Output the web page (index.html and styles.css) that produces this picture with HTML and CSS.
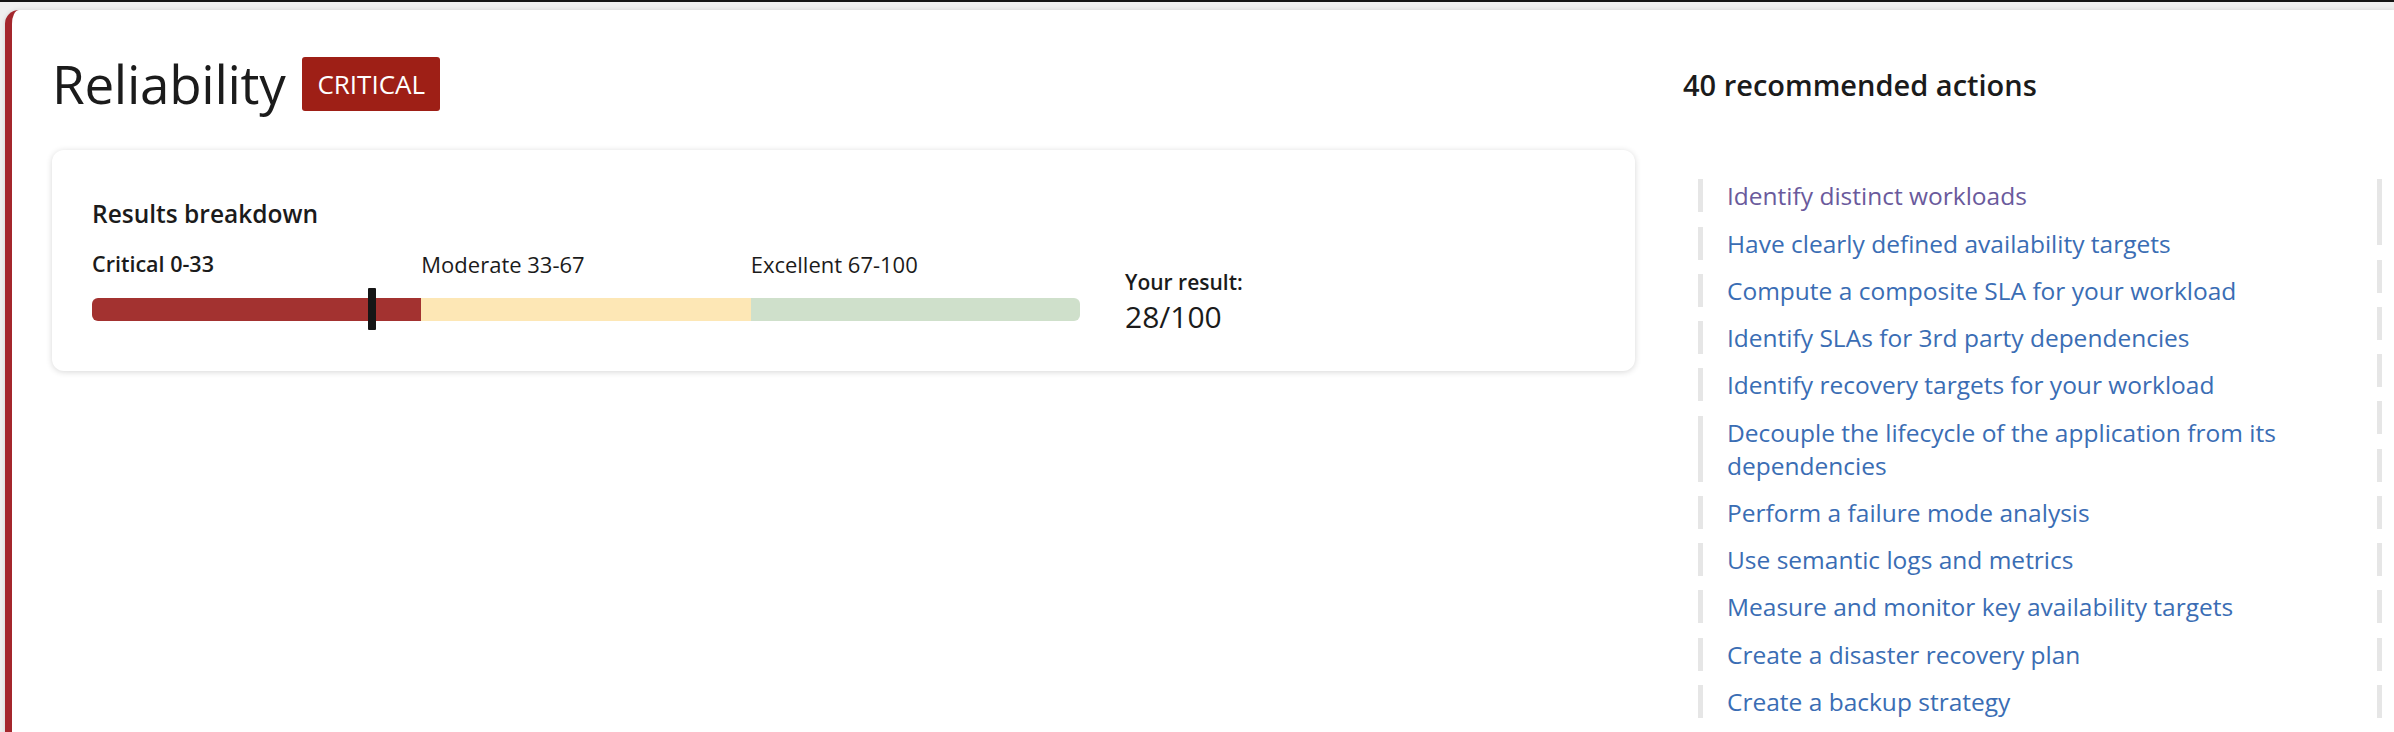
FILE: index.html
```html
<!DOCTYPE html>
<html lang="en">
<head>
<meta charset="utf-8">
<title>Reliability</title>
<link rel="stylesheet" href="styles.css">
</head>
<body>
<main class="panel">
  <section class="summary">
    <header class="title-row">
      <h1 class="title">Reliability</h1>
      <span class="badge">CRITICAL</span>
    </header>
    <div class="results-card">
      <h2 class="results-title">Results breakdown</h2>
      <div class="breakdown">
        <div class="scale">
          <div class="scale-labels">
            <span class="scale-label is-current">Critical 0-33</span>
            <span class="scale-label">Moderate 33-67</span>
            <span class="scale-label">Excellent 67-100</span>
          </div>
          <div class="bar">
            <span class="seg seg-critical"></span>
            <span class="seg seg-moderate"></span>
            <span class="seg seg-excellent"></span>
            <span class="marker" style="left: 28%"></span>
          </div>
        </div>
        <div class="your-result">
          <div class="your-result-label">Your result:</div>
          <div class="your-result-value">28/100</div>
        </div>
      </div>
    </div>
  </section>
  <aside class="actions">
    <h2 class="actions-title">40 recommended actions</h2>
    <ul class="action-list">
      <li><a class="visited" href="#">Identify distinct workloads</a></li>
      <li><a href="#">Have clearly defined availability targets</a></li>
      <li><a href="#">Compute a composite SLA for your workload</a></li>
      <li><a href="#">Identify SLAs for 3rd party dependencies</a></li>
      <li><a href="#">Identify recovery targets for your workload</a></li>
      <li><a href="#">Decouple the lifecycle of the application from its dependencies</a></li>
      <li><a href="#">Perform a failure mode analysis</a></li>
      <li><a href="#">Use semantic logs and metrics</a></li>
      <li><a href="#">Measure and monitor key availability targets</a></li>
      <li><a href="#">Create a disaster recovery plan</a></li>
      <li><a href="#">Create a backup strategy</a></li>
      <li><a href="#">Test your recovery procedures</a></li>
      <li><a href="#">Design for scale out</a></li>
      <li><a href="#">Use availability zones</a></li>
      <li><a href="#">Plan for regional failover</a></li>
      <li><a href="#">Automate deployments</a></li>
      <li><a href="#">Use health probes</a></li>
      <li><a href="#">Implement retry logic</a></li>
      <li><a href="#">Use circuit breakers</a></li>
      <li><a href="#">Apply throttling</a></li>
      <li class="col-start"><a href="#">Use availability zones and regions to protect against datacenter level failures</a></li>
      <li><a href="#">Define alerting rules</a></li>
      <li><a href="#">Perform chaos testing</a></li>
      <li><a href="#">Review capacity limits</a></li>
      <li><a href="#">Document runbooks</a></li>
      <li><a href="#">Use managed services</a></li>
      <li><a href="#">Isolate critical resources</a></li>
      <li><a href="#">Replicate data</a></li>
      <li><a href="#">Validate backups</a></li>
      <li><a href="#">Use queues for decoupling</a></li>
      <li><a href="#">Handle transient faults</a></li>
      <li><a href="#">Track service limits</a></li>
      <li><a href="#">Use load balancing</a></li>
      <li><a href="#">Plan maintenance windows</a></li>
      <li><a href="#">Use deployment slots</a></li>
      <li><a href="#">Roll back safely</a></li>
      <li><a href="#">Review incidents</a></li>
      <li><a href="#">Measure recovery time</a></li>
      <li><a href="#">Protect configuration</a></li>
      <li><a href="#">Review the architecture</a></li>
    </ul>
  </aside>
</main>
</body>
</html>
```
FILE: styles.css
```css
html, body {
  margin: 0;
  height: 732px;
  overflow: hidden;
}
body {
  background: #efefef;
  border-top: 2px solid #141414;
  box-sizing: border-box;
  font-family: "Open Sans", "Noto Sans", sans-serif;
  color: #1b1b1b;
}
.panel {
  margin: 8px 0 0 5px;
  min-height: 900px;
  background: #fff;
  border-left: 7px solid #a4262c;
  border-top-left-radius: 14px;
  box-shadow: 0 0 5px rgba(0, 0, 0, 0.12);
  padding-left: 40px;
  display: grid;
  grid-template-columns: 1583px 1fr;
  column-gap: 48px;
  align-items: start;
}
.summary {
  padding-top: 47px;
}
.title-row {
  display: flex;
  align-items: center;
  gap: 17px;
  height: 54px;
}
.title {
  margin: 0;
  font-size: 53px;
  font-weight: 400;
  line-height: 54px;
  letter-spacing: -0.3px;
}
.badge {
  background: #9e1f16;
  color: #fff;
  font-size: 26px;
  line-height: 54px;
  height: 54px;
  padding: 0 15px;
  border-radius: 3px;
}
.results-card {
  margin-top: 39px;
  height: 221px;
  box-sizing: border-box;
  border-radius: 12px;
  box-shadow: 0 1px 6px rgba(0, 0, 0, 0.16);
  padding: 48px 40px 0 40px;
}
.results-title {
  margin: 0;
  font-size: 24.5px;
  font-weight: 600;
  line-height: 32px;
}
.breakdown {
  display: flex;
  align-items: flex-start;
  margin-top: 19px;
  gap: 45px;
}
.scale {
  width: 988px;
}
.scale-labels {
  display: grid;
  grid-template-columns: 1fr 1fr 1fr;
  font-size: 22px;
  line-height: 30px;
}
.scale-label.is-current {
  font-weight: 600;
  font-size: 21.5px;
}
.bar {
  position: relative;
  display: flex;
  height: 23px;
  margin-top: 19px;
  border-radius: 6px;
}
.seg {
  flex: 1;
}
.seg-critical {
  background: #a33230;
  border-radius: 6px 0 0 6px;
}
.seg-moderate {
  background: #fde7b5;
}
.seg-excellent {
  background: #cfe0cb;
  border-radius: 0 6px 6px 0;
}
.marker {
  position: absolute;
  top: -10px;
  width: 8px;
  height: 42px;
  margin-left: -1px;
  background: #161616;
  border-radius: 1px;
}
.your-result {
  padding-top: 18px;
}
.your-result-label {
  font-size: 21px;
  font-weight: 600;
  line-height: 30px;
}
.your-result-value {
  font-size: 30px;
  font-weight: 500;
  line-height: 40px;
}
.actions {
  padding-top: 57px;
}
.actions-title {
  margin: 0;
  font-size: 29px;
  font-weight: 600;
  line-height: 36px;
}
.action-list {
  list-style: none;
  margin: 62px 0 0 15px;
  padding: 0;
  width: 1358px;
  column-count: 2;
  column-gap: 0;
}
.action-list li {
  border-left: 5px solid #e6e6e6;
  padding: 0 30px 0 24px;
  margin-top: 14.25px;
  font-size: 24.5px;
  line-height: 33px;
  break-inside: avoid;
}
.action-list li.col-start {
  break-before: column;
}
.action-list a {
  color: #3a6db4;
  text-decoration: none;
}
.action-list a.visited {
  color: #6a5a9c;
}
```
